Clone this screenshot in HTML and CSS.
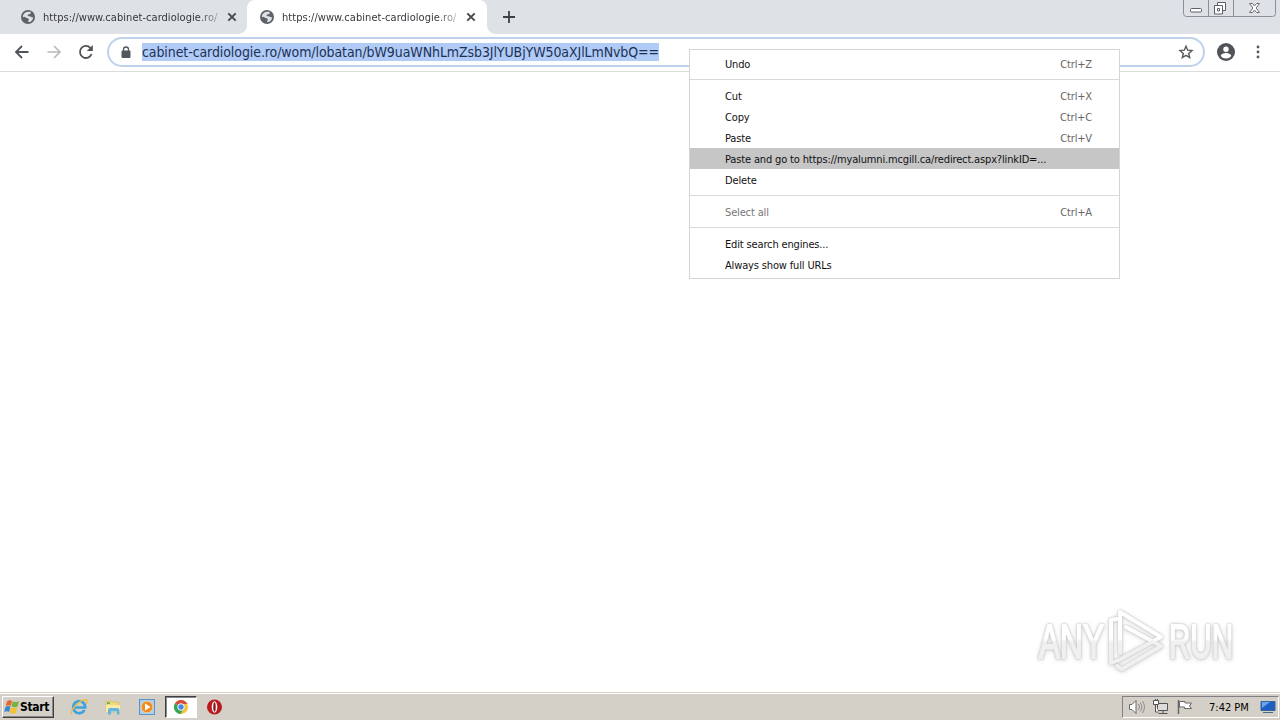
FILE: index.html
```html
<!DOCTYPE html>
<html lang="en">
<head>
    <meta charset="UTF-8">
    <title>cabinet-cardiologie.ro</title>
    <link rel="stylesheet" href="styles.css">
</head>
<body>
    <svg width="0" height="0" class="defs">
        <symbol id="globe" viewBox="0 0 14 14">
            <circle cx="7" cy="7" r="7" fill="#5f6368"/>
            <path d="M7 1.8h2.8L9.4 4 7 4.6 6.6 6l3 .4 1.6 1.2.9-.6c.1 2.6-2 5-4.6 5.1L7 11l1-1.6-1.2-1.2-2-.4L4 6.8l-2.1.4C1.8 4.3 4 1.9 7 1.8z" fill="#dee1e6"/>
        </symbol>
        <symbol id="cross" viewBox="0 0 10 10">
            <path d="M1.3 1.3l7.4 7.4M8.7 1.3L1.3 8.7" stroke="#45484c" stroke-width="1.9"/>
        </symbol>
    </svg>

    <div class="tabs">
        <div class="tab">
            <svg class="favicon"><use href="#globe"/></svg>
            <span class="tab-title">https://www.cabinet-cardiologie.ro/</span>
            <svg class="close"><use href="#cross"/></svg>
        </div>
        <div class="tab active">
            <svg class="favicon"><use href="#globe"/></svg>
            <span class="tab-title">https://www.cabinet-cardiologie.ro/</span>
            <svg class="close"><use href="#cross"/></svg>
        </div>
        <svg class="new-tab" viewBox="0 0 12 12"><path d="M6 0v12M0 6h12" stroke="#3c4043" stroke-width="1.8"/></svg>
        <svg class="window-buttons" viewBox="0 0 94 17">
            <path d="M.5 0v13.5q0 3 3 3h86q3 0 3-3V0M25.5 0v16M50.5 0v16" fill="none" stroke="#8b8f96"/>
            <rect x="7.5" y="8.5" width="11" height="3.5" rx="1" fill="#fff" stroke="#5d6066"/>
            <path d="M34.5 2.5h8v8h-8z" fill="#fff" stroke="#5d6066"/>
            <path d="M31.5 5.5h8v8.5h-8z" fill="#fff" stroke="#5d6066"/>
            <path d="M34.5 8.5h2v2.5h-2z" fill="none" stroke="#5d6066"/>
            <path d="M66.5 3.5h3l2 2.5 2-2.5h3l-3.4 4.5 3.4 4.5h-3l-2-2.5-2 2.5h-3l3.4-4.5z" fill="#fff" stroke="#5d6066" stroke-width=".9"/>
        </svg>
    </div>

    <div class="toolbar">
        <svg class="nav" viewBox="0 0 16 16"><path d="M14.5 8H2M8 2L2 8l6 6" fill="none" stroke="#505357" stroke-width="1.8"/></svg>
        <svg class="nav" viewBox="0 0 16 16"><path d="M1.5 8H14M8 2l6 6-6 6" fill="none" stroke="#b6b8ba" stroke-width="1.6"/></svg>
        <svg class="nav" viewBox="0 0 16 16"><path d="M13.6 10A6 6 0 1 1 12.3 3.8L14 5.5" fill="none" stroke="#505357" stroke-width="1.8"/><path d="M14.8 1v6h-6z" fill="#505357"/></svg>
        <div class="omnibox">
            <svg class="lock" viewBox="0 0 10 12"><path d="M2.5 5V3.5a2.5 2.5 0 0 1 5 0V5" fill="none" stroke="#54575b" stroke-width="1.3"/><rect x=".5" y="4.5" width="9" height="7.5" rx="1" fill="#54575b"/></svg>
            <span class="url">cabinet-cardiologie.ro/wom/lobatan/bW9uaWNhLmZsb3JlYUBjYW50aXJlLmNvbQ==</span>
            <svg class="star" viewBox="0 0 16 16"><path d="M8 2.2l1.7 4 4.3.4-3.3 2.8 1 4.2L8 11.4l-3.7 2.2 1-4.2L2 6.6l4.3-.4z" fill="none" stroke="#54575b" stroke-width="1.4"/></svg>
        </div>
        <svg class="avatar" viewBox="0 0 18 18"><circle cx="9" cy="9" r="9" fill="#505357"/><circle cx="9" cy="6.3" r="2.7" fill="#fff"/><path d="M3.8 13c0-1.9 3-3 5.2-3s5.2 1.1 5.2 3c-1.2 1.7-3 2.5-5.2 2.5S5 14.7 3.8 13z" fill="#fff"/></svg>
        <svg class="dots" viewBox="0 0 4 14"><circle cx="2" cy="2" r="1.4"/><circle cx="2" cy="7" r="1.4"/><circle cx="2" cy="12" r="1.4"/></svg>
    </div>

    <div class="page">
        <svg class="watermark" viewBox="0 0 210 74">
            <defs>
                <linearGradient id="shade" gradientUnits="userSpaceOnUse" x1="0" y1="0" x2="0" y2="74">
                    <stop offset=".48" stop-color="#fff"/>
                    <stop offset=".53" stop-color="#f0f0f0"/>
                </linearGradient>
            </defs>
            <g class="mark-text">
                <text x="8" y="55" textLength="65" lengthAdjust="spacingAndGlyphs">ANY</text>
                <text x="138" y="55" textLength="64" lengthAdjust="spacingAndGlyphs">RUN</text>
            </g>
            <g class="mark-logo">
                <path d="M89 50V9L130 34M95 24L128 42M80 58V17L86 16M80 60L88 57 130 34M91 66L130 43M91 66L86 63"/>
            </g>
        </svg>
    </div>

    <div class="menu">
        <div class="group">
            <div class="item"><span>Undo</span><span class="key">Ctrl+Z</span></div>
        </div>
        <div class="group">
            <div class="item"><span>Cut</span><span class="key">Ctrl+X</span></div>
            <div class="item"><span>Copy</span><span class="key">Ctrl+C</span></div>
            <div class="item"><span>Paste</span><span class="key">Ctrl+V</span></div>
            <div class="item selected"><span>Paste and go to https://myalumni.mcgill.ca/redirect.aspx?linkID=...</span></div>
            <div class="item"><span>Delete</span></div>
        </div>
        <div class="group">
            <div class="item disabled"><span>Select all</span><span class="key">Ctrl+A</span></div>
        </div>
        <div class="group">
            <div class="item"><span>Edit search engines...</span></div>
            <div class="item"><span>Always show full URLs</span></div>
        </div>
    </div>

    <div class="taskbar">
        <div class="start">
            <svg viewBox="0 0 16 16"><path d="M3 2.5q2.5-2 5-.5L6.800 7q-2.500-1.500-5 .2z" fill="#e8642c"/><path d="M8.700 2.3q2.500 1.500 6.300 0L13.600 7.600q-2.800 1.300-6.100-.2z" fill="#76b43c"/><path d="M1.5 8q2.500-1.800 5-.3L5.200 13Q2.700 11.500.2 13z" fill="#3d86d0"/><path d="M7.2 8.200q2.700 1.500 6.100.2L12 14q-2.800 1.200-6.200-.4z" fill="#f6c12f"/></svg>
            <span>Start</span>
        </div>
        <div class="launch">
            <svg viewBox="0 0 18 18"><path d="M14.5 12A6 6 0 1 1 15.2 9.500H5" fill="none" stroke="#3ba2df" stroke-width="2.6"/><path d="M2 16.500C-1 12 12 0 16.500 2q1.500 1-.5 4" fill="none" stroke="#e9bd42" stroke-width="1.4"/></svg>
        </div>
        <div class="launch">
            <svg viewBox="0 0 18 18"><path d="M2 3h5l1 1h7v10H2z" fill="#f1d777" stroke="#d6b65a" stroke-width=".6"/><path d="M3 4h3v2H3z" fill="#6fb35d"/><path d="M2 7h14v7H2z" fill="#faeaa5"/><path d="M4 16.500V12q0-2 2-2h7q2.500 0 2.500 2v4.500H13v-3H7v3z" fill="#65b4dc"/></svg>
        </div>
        <div class="launch">
            <svg viewBox="0 0 18 18"><rect x="1.5" y="1.5" width="15" height="15" fill="#a9d0ee" stroke="#5b94c7"/><circle cx="9" cy="9" r="5.8" fill="#f28a1c" stroke="#fbd19b" stroke-width=".8"/><path d="M7 5.500v7L12.500 9z" fill="#fff"/></svg>
        </div>
        <div class="launch running">
            <svg viewBox="0 0 18 18"><circle cx="9" cy="9" r="7" fill="#f3c534"/><path d="M9 9L2.900 5.500A7 7 0 0 1 15.100 5.500L15.500 6H9z" fill="#dc4a3d"/><path d="M9 9L2.900 5.500A7 7 0 0 0 8.600 16L11.500 11z" fill="#36a455"/><circle cx="9" cy="9" r="3.3" fill="#4689e8" stroke="#fff"/></svg>
        </div>
        <div class="launch">
            <svg viewBox="0 0 18 18"><circle cx="8.5" cy="9" r="7.5" fill="#b81a1f"/><ellipse cx="8.5" cy="9" rx="2.8" ry="5.8" fill="#fff"/><ellipse cx="8.5" cy="9" rx="1.2" ry="4.8" fill="#8d1014"/></svg>
        </div>
        <div class="tray">
            <svg viewBox="0 0 18 16"><path d="M1.5 5.5H4l4-4v13l-4-4H1.500z" fill="#fff" stroke="#6b6b6b"/><path d="M10.5 5q2 3 0 6M12.500 3.500q3 4.500 0 9M14.500 2q4 6 0 12" fill="none" stroke="#888" stroke-width=".9"/></svg>
            <svg viewBox="0 0 18 16"><path d="M5.5 4.5h10v7h-10z" fill="#ddd" stroke="#555"/><path d="M6.5 14.5h9M11 12v2" stroke="#555"/><path d="M1.5 1.5h5v4h-5zM3.500 0v2M5.500 0v2M3.500 5.500v7.500h3" fill="#fff" stroke="#555"/></svg>
            <svg viewBox="0 0 18 16"><path d="M2.5 1v14" stroke="#666" stroke-width="1.5"/><path d="M3.5 2.5H9V4h6.500l-2 3 2 2.500h-7V8h-5z" fill="#fff" stroke="#666"/></svg>
            <span class="clock">7:42 PM</span>
            <svg class="desktop" viewBox="0 0 16 14"><path d="M1 1.5h14v9H1z" fill="#1d5fc0" stroke="#37649c"/><path d="M2 2h8L2 8z" fill="#6aa5ea"/><path d="M3 12.5h10" stroke="#456a94"/></svg>
        </div>
    </div>
</body>
</html>
```
FILE: styles.css
```css
* {
    box-sizing: border-box;
}

body {
    margin: 0;
    width: 1280px;
    height: 720px;
    overflow: hidden;
    display: flex;
    flex-direction: column;
    background-color: #fff;
    color: #111;
    font-family: "DejaVu Sans Condensed", "DejaVu Sans", sans-serif;
    font-stretch: condensed;
    font-size: 11px;
}

svg {
    display: block;
    flex: none;
}

.defs {
    position: absolute;
}

.tabs {
    display: flex;
    height: 34px;
    background-color: #dee1e6;
    padding-left: 7px;
}

.tab {
    display: flex;
    align-items: center;
    width: 240px;
    height: 34px;
    padding-left: 14px;
}

.tab.active {
    position: relative;
    padding-left: 13px;
    background-color: #fff;
    border-radius: 8px 8px 0 0;
}

/* curved feet of the active tab */
.tab.active::before,
.tab.active::after {
    content: "";
    position: absolute;
    bottom: 0;
    width: 8px;
    height: 8px;
}

.tab.active::before {
    left: -8px;
    background: radial-gradient(circle at 0 0, #dee1e6 7.5px, #fff 8px);
}

.tab.active::after {
    right: -8px;
    background: radial-gradient(circle at 100% 0, #dee1e6 7.5px, #fff 8px);
}

.favicon {
    width: 14px;
    height: 14px;
    margin-right: 8px;
}

.tab-title {
    width: 176px;
    white-space: nowrap;
    letter-spacing: 0.04px;
    color: #35383c;
    -webkit-mask-image: linear-gradient(to right, #000 155px, rgba(0, 0, 0, 0.2) 178px);
    mask-image: linear-gradient(to right, #000 155px, rgba(0, 0, 0, 0.2) 178px);
}

.close {
    width: 10px;
    height: 10px;
    margin-left: 8px;
}

.new-tab {
    width: 12px;
    height: 12px;
    margin: 11px 0 0 16px;
}

.window-buttons {
    width: 94px;
    height: 17px;
    margin-left: auto;
    margin-right: 3px;
}

.toolbar {
    display: flex;
    align-items: center;
    height: 38px;
    padding-left: 14px;
    padding-bottom: 2px;
    border-bottom: 1px solid #dadce0;
}

.nav {
    width: 16px;
    height: 16px;
    margin-right: 16px;
}

.omnibox {
    display: flex;
    align-items: center;
    width: 1098px;
    height: 30px;
    margin-left: -3px;
    padding-left: 12px;
    padding-right: 9px;
    border: 2px solid #bfd2ec;
    border-radius: 15px;
}

.lock {
    width: 10px;
    height: 12px;
    margin-right: 11px;
}

.url {
    height: 18px;
    line-height: 18px;
    font-size: 14px;
    letter-spacing: -0.09px;
    white-space: nowrap;
    color: #1c3157;
    background-color: #b0cbf5;
}

.star {
    width: 16px;
    height: 16px;
    margin-left: auto;
}

.avatar {
    width: 18px;
    height: 18px;
    margin-left: 12px;
}

.dots {
    width: 4px;
    height: 14px;
    margin-left: 21px;
    fill: #54575b;
}

.page {
    flex: 1;
    display: flex;
    justify-content: flex-end;
    align-items: flex-end;
    padding: 0 39px 15px 0;
}

.watermark {
    width: 210px;
    height: 74px;
    overflow: visible;
    filter: drop-shadow(0 0 1px #bbb) drop-shadow(0 1px 2px #ddd);
}

.mark-text {
    font-family: "Liberation Sans", Arial, sans-serif;
    font-size: 48px;
    fill: url(#shade);
    stroke: url(#shade);
    stroke-width: 2;
}

.mark-logo {
    fill: none;
    stroke: url(#shade);
    stroke-width: 4;
    stroke-linejoin: round;
    stroke-linecap: round;
}

.menu {
    position: absolute;
    left: 689px;
    top: 49px;
    width: 431px;
    height: 230px;
    background-color: #fff;
    border: 1px solid #d5d5d5;
    letter-spacing: -0.15px;
}

.group {
    padding: 5px 0;
    border-bottom: 1px solid #d9d9d9;
}

.group:first-child {
    padding-top: 3px;
}

.group:last-child {
    border-bottom: none;
}

.item {
    display: flex;
    justify-content: space-between;
    height: 21px;
    line-height: 21px;
    padding: 1px 27px 0 35px;
    white-space: nowrap;
}

.item.selected {
    background-color: #c6c6c6;
}

.item.disabled {
    color: #777;
}

.key {
    color: #666;
}

.taskbar {
    display: flex;
    align-items: center;
    height: 28px;
    padding-left: 2px;
    background-color: #d4d0c8;
    border-top: 1px solid #d4d0c8;
    box-shadow: inset 0 1px 0 #fff;
}

.start {
    display: flex;
    align-items: center;
    width: 52px;
    height: 22px;
    padding-left: 1px;
    margin-top: 1px;
    margin-right: 9px;
    border: 1px solid;
    border-color: #fff #404040 #404040 #fff;
    box-shadow: inset -1px -1px 0 #888;
    color: #000;
    font-size: 12px;
    font-weight: bold;
    letter-spacing: -0.3px;
}

.start svg {
    width: 16px;
    height: 16px;
}

.launch {
    display: flex;
    align-items: center;
    justify-content: center;
    width: 32px;
    height: 22px;
    margin-right: 2px;
}

.launch svg {
    width: 18px;
    height: 18px;
}

.launch.running {
    background-color: #fff;
    border: 1px solid;
    border-color: #404040 #fff #fff #404040;
    box-shadow: inset 1px 1px 0 #888;
}

.tray {
    display: flex;
    align-items: center;
    width: 157px;
    height: 22px;
    margin: 1px 1px 0 auto;
    padding-left: 5px;
    border: 1px solid;
    border-color: #808080 #fff #fff #808080;
    color: #000;
}

.tray svg {
    width: 18px;
    height: 16px;
    margin-right: 6px;
}

.clock {
    margin-left: 9px;
    white-space: nowrap;
}

.tray .desktop {
    width: 16px;
    height: 14px;
    margin-left: auto;
    margin-right: 2px;
}
```
